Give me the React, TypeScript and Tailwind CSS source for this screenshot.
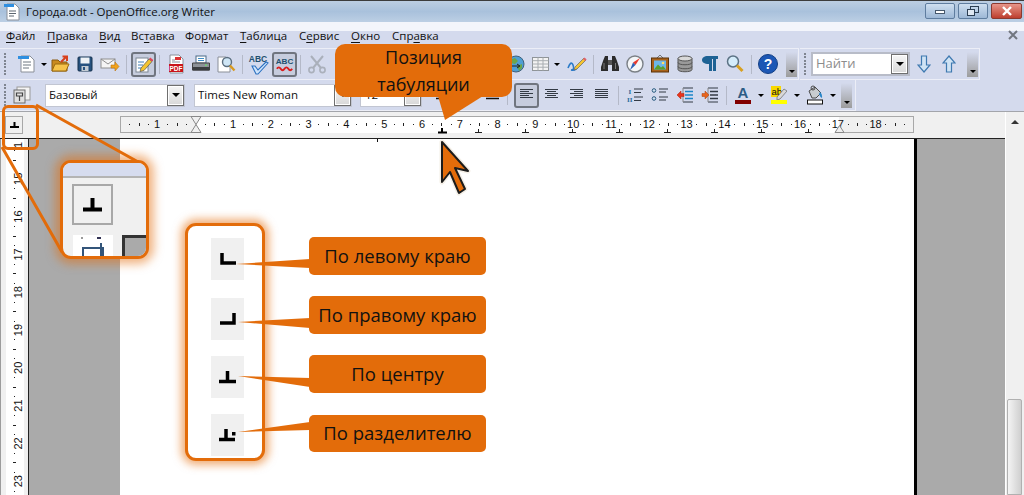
import React from "react";

const S = ({ children, w = 20, h = 20 }: { children: React.ReactNode; w?: number; h?: number }) => (
  <svg width={w} height={h} viewBox={`0 0 ${w} ${h}`} className="block">{children}</svg>
);

const Btn = ({ children, active, w = "w-[25px]" }: { children?: React.ReactNode; active?: boolean; w?: string }) => (
  <div className={`${w} h-[25px] shrink-0 flex items-center justify-center rounded-[3px] ${active ? "border-2 border-[#70757f] bg-[#c6ccdd]" : ""}`}>
    {children}
  </div>
);
const Sep = () => (
  <div className="w-[8px] h-[25px] shrink-0 flex justify-center items-center">
    <div className="w-px h-[19px] bg-[#b4b9c8]" />
  </div>
);
const Drop = ({ w = "w-[8px]" }: { w?: string }) => (
  <div className={`${w} h-[25px] shrink-0 flex items-center justify-center`}>
    <div className="w-0 h-0 border-x-[3px] border-x-transparent border-t-[3px] border-t-black" />
  </div>
);
const Grip = () => (
  <div className="w-[3px] h-[24px] shrink-0 flex flex-col justify-between py-px">
    {Array.from({ length: 7 }).map((_, i) => (
      <div key={i} className="w-[2px] h-[2px] bg-[#7f8590]" />
    ))}
  </div>
);
const More = () => (
  <div className="w-[11px] h-[25px] shrink-0 flex items-end justify-center pb-[4px] bg-gradient-to-b from-[#d4daed] to-[#9c9c9c]">
    <div className="w-0 h-0 border-x-[3px] border-x-transparent border-t-[3px] border-t-black" />
  </div>
);
const ComboArrow = () => (
  <div className="w-[17px] h-full shrink-0 flex items-center justify-center border border-[#6f6f6f] bg-gradient-to-b from-[#f6f6f6] to-[#d8d8d8] outline outline-1 outline-white -outline-offset-2">
    <div className="w-0 h-0 border-x-[4px] border-x-transparent border-t-[4px] border-t-black" />
  </div>
);
const Combo = ({ w, text, pad = "pl-[3px]" }: { w: string; text: string; pad?: string }) => (
  <div className={`${w} h-[23px] shrink-0 flex items-center bg-white border border-[#c2c6d2]`}>
    <span className={`flex-1 ${pad} text-[11.5px] text-[#111] whitespace-nowrap overflow-hidden`}>{text}</span>
    <ComboArrow />
  </div>
);

const Page = ({ x = 4, y = 2, w = 11, h = 15 }: { x?: number; y?: number; w?: number; h?: number }) => (
  <path d={`M${x} ${y}h${w - 4}l4 4v${h - 4}h-${w}z`} fill="#fff" stroke="#8a8f98" strokeWidth="1" />
);

const IconNew = () => (
  <S w={20} h={20}>
    <Page x={4} y={2} w={13} h={16} />
    <rect x="1" y="2" width="11" height="3" fill="#2f8fe0" />
    <path d="M6 8h8M6 11h8M6 14h6" stroke="#6d7680" strokeWidth="1" />
  </S>
);
const IconOpen = () => (
  <S>
    <path d="M2 6h6l2 2h7v9H2z" fill="#c98a20" stroke="#8a5a10" />
    <path d="M2 17l3-7h14l-3 7z" fill="#f6c34a" stroke="#9a6a10" />
    <path d="M11 8l5-5M12.5 2.5H17V7" stroke="#d8401c" strokeWidth="2" fill="none" />
  </S>
);
const IconSave = () => (
  <S>
    <rect x="3" y="3" width="14" height="14" rx="1" fill="#26527f" stroke="#16324f" />
    <rect x="5.5" y="3.5" width="9" height="6" fill="#eef2f6" />
    <rect x="6.5" y="12" width="7" height="5" fill="#c4ccd4" />
    <rect x="8" y="13" width="2" height="3" fill="#26527f" />
  </S>
);
const IconMail = () => (
  <S>
    <rect x="1" y="5" width="14" height="9" fill="#f5f5f5" stroke="#8f8f8f" />
    <path d="M1 5l7 5 7-5" fill="none" stroke="#8f8f8f" />
    <path d="M11 11h4V8l4 4.5-4 4.5v-3h-4z" fill="#f2a31c" stroke="#b87410" strokeWidth=".6" />
  </S>
);
const IconEdit = () => (
  <S>
    <rect x="3" y="4" width="12" height="14" fill="#fff" stroke="#7c8794" />
    <path d="M5 8h6M5 11h5M5 14h7" stroke="#3f7fb5" />
    <path d="M8 14l8-9 3 2.5-8 9-4 1z" fill="#f4c430" stroke="#555" strokeWidth=".7" />
    <path d="M16 5l1.2-1.4 3 2.4L19 7.5z" fill="#e0455a" />
  </S>
);
const IconPdf = () => (
  <S>
    <Page x={4} y={1} w={13} h={18} />
    <rect x="9" y="3" width="6" height="3" fill="#d33" />
    <path d="M6 6h3M6 8h8" stroke="#8a8f98" />
    <rect x="3" y="10" width="14" height="8" fill="#c9151b" />
    <text x="10" y="16.6" fontSize="6.5" fontWeight="700" textAnchor="middle" fill="#fff" fontFamily="Liberation Sans">PDF</text>
  </S>
);
const IconPrint = () => (
  <S>
    <rect x="5" y="2" width="10" height="7" fill="#fff" stroke="#4a6a88" />
    <path d="M7 4.5h6M7 6.5h6" stroke="#3f8fc8" />
    <path d="M1.5 9h17v7h-17z" fill="#8d9298" stroke="#444" />
    <rect x="1.5" y="13" width="17" height="3.5" fill="#3a3d40" />
    <rect x="14" y="10.5" width="2" height="1.5" fill="#6fd36f" />
  </S>
);
const IconPreview = () => (
  <S>
    <Page x={2} y={3} w={12} h={15} />
    <circle cx="11" cy="8" r="4.5" fill="#cfe6f6" stroke="#5c6f80" strokeWidth="1.4" />
    <path d="M14 11.5l4.5 5" stroke="#d89a20" strokeWidth="2.4" />
  </S>
);
const IconAbc = () => (
  <S w={22} h={22}>
    <text x="10" y="8.6" fontSize="8.5" fontWeight="700" textAnchor="middle" fill="#23506f" fontFamily="Liberation Sans">ABC</text>
    <path d="M4 13l3 0 3 4 8-8 2 1-10 11-2 0z" fill="#cfe4fb" stroke="#2a70c0" strokeWidth="1.1" />
  </S>
);
const IconAbcWave = () => (
  <S w={22} h={20}>
    <text x="11" y="10" fontSize="8.5" fontWeight="700" textAnchor="middle" fill="#23506f" fontFamily="Liberation Sans">ABC</text>
    <path d="M3 15q2-3 4 0t4 0 4 0 4 0" fill="none" stroke="#d91c1c" strokeWidth="2" />
  </S>
);
const IconCut = () => (
  <S>
    <path d="M4 2l10 12M16 2L6 14" stroke="#aab0bb" strokeWidth="2" />
    <circle cx="4.5" cy="16" r="2.6" fill="none" stroke="#aab0bb" strokeWidth="1.6" />
    <circle cx="15.5" cy="16" r="2.6" fill="none" stroke="#aab0bb" strokeWidth="1.6" />
  </S>
);
const IconGlobe = () => (
  <S>
    <circle cx="10" cy="10" r="8" fill="#4f9fd3" stroke="#40607a" />
    <path d="M4 6l5-2 3 3-3 3-4-1zM11 12l5-2 0 4-3 3z" fill="#6ca54a" />
    <path d="M5 12h8m-2-2l3 2-3 2" stroke="#222" fill="none" />
  </S>
);
const IconTable = () => (
  <S w={17} h={14}>
    <rect x=".5" y=".5" width="16" height="13" fill="#f3f3f3" stroke="#8f9498" />
    <path d="M.5 3.7h16M.5 7h16M.5 10.2h16M6 .5v13M11 .5v13" stroke="#a8adb1" />
  </S>
);
const IconDraw = () => (
  <S>
    <path d="M1 14q3-8 5-3t-2 5q5 1 6-3" fill="none" stroke="#2a7ac8" strokeWidth="1.6" />
    <path d="M8 13l9-9 2 2-9 9-3 1z" fill="#f4c430" stroke="#666" strokeWidth=".7" />
    <path d="M16 5l1.6-1.6 2 2L18 7z" fill="#e0606a" />
  </S>
);
const IconBinoc = () => (
  <S>
    <path d="M3 7l2-5h3v15H1V13z" fill="#2c2c2c" />
    <path d="M17 7l-2-5h-3v15h7V13z" fill="#2c2c2c" />
    <rect x="8" y="6" width="4" height="5" fill="#555" />
    <path d="M4 9v6M15.5 9v6" stroke="#7a7a7a" />
  </S>
);
const IconCompass = () => (
  <S>
    <circle cx="10" cy="10" r="8" fill="#f4f6f8" stroke="#7b8086" strokeWidth="1.4" />
    <path d="M15 4l-7 4.5 2.5 2.5z" fill="#e63a2e" />
    <path d="M5 16l3-7.5 2.5 2.5z" fill="#2c62b8" />
  </S>
);
const IconPicture = () => (
  <S w={20} h={20}>
    <path d="M7 4l3-3 3 3" fill="none" stroke="#777" />
    <rect x="1.5" y="4" width="17" height="14" fill="#a9621a" stroke="#5a3208" />
    <rect x="4" y="6.5" width="12" height="9" fill="#6cb6e8" />
    <path d="M4 15.5l4-5 3 3 2-1.5 3 3.5z" fill="#5aa02c" />
    <circle cx="13" cy="9" r="1.3" fill="#ffe06a" />
  </S>
);
const IconDb = () => (
  <S>
    <path d="M3 4.5v11c0 3 14 3 14 0v-11z" fill="#9a9a9a" stroke="#555" />
    <ellipse cx="10" cy="4.5" rx="7" ry="2.5" fill="#d8d8d8" stroke="#555" />
    <path d="M3 8.5c0 3 14 3 14 0M3 12.5c0 3 14 3 14 0" fill="none" stroke="#555" />
  </S>
);
const IconPilcrow = () => (
  <S>
    <path d="M9 17V10C4 10 2 8 2 6s2-4 6-4h10v3h-2v12h-3V5h-1v12z" fill="#1d6294" />
  </S>
);
const IconFind = () => (
  <S>
    <circle cx="8" cy="7.5" r="5.5" fill="#d4ecfa" stroke="#5c7385" strokeWidth="1.5" />
    <path d="M12 11.5l5.500 5.500" stroke="#d8a020" strokeWidth="3" />
  </S>
);
const IconHelp = () => (
  <S w={22} h={22}>
    <circle cx="11" cy="11" r="9.500" fill="#1c57b5" stroke="#133f85" />
    <text x="11" y="16" fontSize="14" fontWeight="700" textAnchor="middle" fill="#fff" fontFamily="Liberation Sans">?</text>
  </S>
);
const IconStyle = () => (
  <S>
    <rect x="5" y="2" width="13" height="13" fill="#f4f4f4" stroke="#9a9a9a" />
    <rect x="2" y="5" width="11" height="13" fill="#e0e0e0" stroke="#6c6c6c" />
    <path d="M4.5 8h6v3h-6zM7.5 11v5" fill="none" stroke="#444" strokeWidth="1.2" />
  </S>
);
const Lines = ({ rows }: { rows: [number, number][] }) => (
  <S w={14} h={12}>
    {rows.map(([x, l], i) => (
      <rect key={i} x={x} y={i * 2} width={l} height="1" fill="#333a44" />
    ))}
  </S>
);
const IconNum = () => (
  <S w={18} h={16}>
    <text x="2.5" y="7" fontSize="7" fontWeight="700" fill="#2a6a9a" fontFamily="Liberation Serif">I</text>
    <text x="1" y="15" fontSize="7" fontWeight="700" fill="#2a6a9a" fontFamily="Liberation Serif">II</text>
    <path d="M8 2h9M8 5.5h7M8 10h9M8 13.5h7" stroke="#333a44" />
  </S>
);
const IconBul = () => (
  <S w={18} h={16}>
    <circle cx="3" cy="3.5" r="1.8" fill="#cfe0ee" stroke="#2a5a80" />
    <circle cx="3" cy="11.5" r="1.8" fill="#cfe0ee" stroke="#2a5a80" />
    <path d="M8 2h9M8 5h7M8 10h9M8 13h7" stroke="#333a44" />
  </S>
);
const IconIndent = ({ right }: { right?: boolean }) => (
  <S w={18} h={16}>
    <path d="M7 1h10M7 15h10" stroke="#333a44" />
    <path d="M9 4.5h8M9 8h8M9 11.5h8" stroke={right ? "#333a44" : "#1a86c8"} strokeWidth="1.4" />
    <path d="M7 1v14" stroke="#8a8a8a" />
    {right ? (
      <path d="M1 6.5h3V4l4 4-4 4V9.5H1z" fill="#e8641c" stroke="#a8400c" strokeWidth=".5" />
    ) : (
      <path d="M8 6.5H5V4L1 8l4 4V9.5h3z" fill="#e8341c" stroke="#a8200c" strokeWidth=".5" />
    )}
  </S>
);
const IconColor = () => (
  <S w={16} h={20}>
    <text x="8" y="13" fontSize="15" fontWeight="700" textAnchor="middle" fill="#2d5c85" fontFamily="Liberation Sans">A</text>
    <rect x="0" y="15" width="16" height="4" fill="#800000" />
  </S>
);
const IconHigh = () => (
  <S w={16} h={20}>
    <rect x="0" y="1" width="10" height="11" fill="#f8d800" />
    <text x=".5" y="10" fontSize="9.5" fill="#111" fontFamily="Liberation Sans">ab</text>
    <path d="M6 12l7-8 3 2-7 8-3 1z" fill="#d8d8d8" stroke="#666" strokeWidth=".7" />
    <rect x="0" y="15" width="16" height="4" fill="#ffff00" />
  </S>
);
const IconBg = () => (
  <S w={16} h={20}>
    <path d="M2 6l6-4 6 6-5 5H5z" fill="#c8ccd0" stroke="#4a4a4a" />
    <path d="M13 7q2.5 2 2 6-2-1-3-4z" fill="#2a86c8" />
    <circle cx="6" cy="3" r="2" fill="none" stroke="#4a4a4a" />
    <rect x=".5" y="15" width="15" height="4" fill="#fff" stroke="#111" />
  </S>
);
const ArrowV = ({ up }: { up?: boolean }) => (
  <S w={14} h={18}>
    <path
      d={up ? "M7 1l6 7H9.500v9h-5V8H1z" : "M7 17l6-7H9.500V1h-5v9H1z"}
      fill="#cfe3f4"
      stroke="#3f79b0"
      strokeWidth="1.2"
    />
  </S>
);

const Menu = ({ before = "", ul, after = "", w }: { before?: string; ul: string; after?: string; w: string }) => (
  <span className={`${w} shrink-0 whitespace-nowrap`}>
    {before}
    <span className="underline underline-offset-2">{ul}</span>
    {after}
  </span>
);

const HRuler = () => {
  const W = 794;
  const nums: { x: number; t: string }[] = [{ x: 157 - 120, t: "1" }];
  for (let n = 1; n <= 18; n++) nums.push({ x: 233 + 37.8 * (n - 1) - 120, t: String(n) });
  const ticks: React.ReactNode[] = [];
  for (let i = 0; i < 84; i++) {
    const x = 195.5 - 120 + (i - 8) * 9.45;
    if (x < 3 || x > W - 3) continue;
    const q = ((i % 4) + 4) % 4;
    if (q === 0) continue;
    ticks.push(q === 2 ? <rect key={i} x={Math.round(x)} y="7" width="1" height="3" fill="#222" /> : <rect key={i} x={Math.round(x)} y="8" width="1" height="1" fill="#222" />);
  }
  const tabs = [478, 525, 572, 619, 667, 714, 761, 808];
  return (
    <svg width={W} height="18" viewBox={`0 0 ${W} 18`} className="block shrink-0">
      <rect x=".5" y=".5" width={W - 1} height="16" fill="#f0f0f0" stroke="#a8a8a8" />
      <rect x="76" y="1" width="643" height="16" fill="#fff" />
      {ticks}
      {nums.map((n, i) => (
        <text key={i} x={n.x} y="12" fontSize="11" textAnchor="middle" fill="#111" fontFamily="Liberation Sans">{n.t}</text>
      ))}
      {tabs.map((x) => (
        <path key={x} d={`M${x - 120 + 0.5} 13v3M${x - 123} 16.5h7`} stroke="#222" />
      ))}
      <path d={`M${442 - 120} 12v4M${442 - 124} 16.5h9`} stroke="#000" strokeWidth="2" />
      <path d="M71 .5h10l-5 8 5 8H71l5-8z" fill="#f0f0f0" stroke="#888" />
      <path d="M715 16.5h9l-4.500-7z" fill="#f0f0f0" stroke="#888" />
    </svg>
  );
};

const VRuler = () => {
  const nums = [15, 16, 17, 18, 19, 20, 21, 22, 23];
  const dots: React.ReactNode[] = [];
  for (let i = 0; i < 40; i++) {
    const y = 2 + i * 9.45;
    const q = i % 4;
    if (q === 0) continue;
    dots.push(<rect key={i} x={q === 2 ? 13 : 14} y={Math.round(y)} width={q === 2 ? 3 : 1} height="1" fill="#222" />);
  }
  return (
    <svg width="29" height="356" viewBox="0 0 29 356" className="block shrink-0">
      <rect x="0" width="1" height="356" fill="#9c9c9c" />
      <rect x="1" width="5" height="356" fill="#f0f0f0" />
      <rect x="6" width="18" height="356" fill="#fff" />
      <rect x="24" width="4" height="356" fill="#f0f0f0" />
      <rect x="28" width="1" height="356" fill="#222" />
      {dots}
      <text x="18" y="6" fontSize="11" textAnchor="middle" dominantBaseline="central" fill="#111" fontFamily="Liberation Sans" transform="rotate(-90 18 6)">1</text>
      {nums.map((n, i) => {
        const y = 2 + (i + 1) * 37.8;
        return (
          <text key={n} x="18" y={y} fontSize="11" textAnchor="middle" dominantBaseline="central" fill="#111" fontFamily="Liberation Sans" transform={`rotate(-90 18 ${y})`}>{n}</text>
        );
      })}
    </svg>
  );
};

const Label = ({ children, cls }: { children: React.ReactNode; cls: string }) => (
  <div className={`absolute left-[309px] w-[177px] flex items-center justify-center rounded-[5px] bg-[#e36c0a] text-[18.5px] leading-none text-[#111] whitespace-nowrap ${cls}`}>
    {children}
  </div>
);

const Tile = ({ children, cls = "" }: { children: React.ReactNode; cls?: string }) => (
  <div className={`w-[33px] h-[42px] bg-[#f0f0f0] flex items-center justify-center ${cls}`}>{children}</div>
);
const TabL = () => <S w={16} h={14}><path d="M2 1v10h14" fill="none" stroke="#000" strokeWidth="3.5" /></S>;
const TabR = () => <S w={16} h={14}><path d="M14 1v10H0" fill="none" stroke="#000" strokeWidth="3.5" /></S>;
const TabC = () => <S w={17} h={14}><path d="M8.500 1v10M0 11.500h17" fill="none" stroke="#000" strokeWidth="3.5" /></S>;
const TabD = () => (
  <S w={17} h={14}>
    <path d="M7 1v10M0 11.500h16" fill="none" stroke="#000" strokeWidth="3.5" />
    <rect x="13" y="4" width="3.5" height="3.5" fill="#000" />
  </S>
);

export default function App() {
  return (
    <div className="relative w-[1024px] h-[495px] overflow-hidden flex flex-col bg-[#d4daed] font-['Open_Sans','Noto_Sans',sans-serif]">
      {/* Title bar */}
      <div className="h-[22px] shrink-0 flex items-center border-t border-[#3c3c3c] bg-gradient-to-b from-[#bccee2] via-[#a9c1dc] to-[#bccfe4]">
        <div className="w-[26px] pl-[4px] shrink-0">
          <S w={16} h={18}>
            <path d="M3 1h8l4 4v12H3z" fill="#fff" stroke="#8a9099" />
            <rect x="0" y="1" width="10" height="3" fill="#2f8fe0" />
            <path d="M5 8h7M5 10.500h7M5 13h5" stroke="#5c6670" />
          </S>
        </div>
        <span className="text-[11.5px] text-[#111] whitespace-nowrap flex-1">Города.odt - OpenOffice.org Writer</span>
        <div className="flex items-start self-start gap-[3px] pr-[2px] pt-[2px]">
          <div className="w-[30px] h-[16px] rounded-[2px] border border-[#5f7d9f] bg-gradient-to-b from-[#cfdff0] to-[#9db8d6] flex items-center justify-center">
            <div className="w-[10px] h-[4px] bg-white border border-[#46586c] mt-[2px]" />
          </div>
          <div className="w-[30px] h-[16px] rounded-[2px] border border-[#5f7d9f] bg-gradient-to-b from-[#cfdff0] to-[#9db8d6] flex items-center justify-center">
            <S w={12} h={10}>
              <rect x="3.5" y=".5" width="8" height="6" fill="none" stroke="#2c3e52" />
              <rect x=".5" y="3.5" width="7" height="6" fill="#dfe8f2" stroke="#2c3e52" />
            </S>
          </div>
          <div className="w-[31px] h-[16px] rounded-[2px] border border-[#8a3a30] bg-gradient-to-b from-[#e6958a] to-[#bd3d2d] flex items-center justify-center">
            <S w={12} h={10}>
              <path d="M2 1l8 8M10 1L2 9" stroke="#fff" strokeWidth="2.4" />
            </S>
          </div>
        </div>
      </div>

      {/* Menu bar */}
      <div className="h-[26px] shrink-0 flex items-start pt-[6px] pl-[6px] text-[11.5px] leading-[16px] text-[#111] bg-[linear-gradient(#f3f5fb_9px,#d4daed_9px)]">
        <Menu ul="Ф" after="айл" w="w-[41px]" />
        <Menu ul="П" after="равка" w="w-[52px]" />
        <Menu ul="В" after="ид" w="w-[32px]" />
        <Menu before="Вс" ul="т" after="авка" w="w-[54px]" />
        <Menu before="Фо" ul="р" after="мат" w="w-[55px]" />
        <Menu ul="Т" after="аблица" w="w-[59px]" />
        <Menu before="С" ul="е" after="рвис" w="w-[52px]" />
        <Menu ul="О" after="кно" w="w-[41px]" />
        <Menu before="Спр" ul="а" after="вка" w="w-[60px]" />
        <div className="ml-auto mr-[6px] mt-[2px]">
          <S w={10} h={10}><path d="M1 1l8 8M9 1L1 9" stroke="#71767f" strokeWidth="2" /></S>
        </div>
      </div>

      {/* Toolbar row 1 */}
      <div className="h-[32px] shrink-0 flex">
        <div className="w-[799px] flex items-center pl-[4px] pr-[1px] border-t border-b border-r border-[#eceef7]">
          <Grip />
          <div className="w-[7.5px] shrink-0" />
          <Btn><IconNew /></Btn>
          <Drop />
          <Btn><IconOpen /></Btn>
          <Btn><IconSave /></Btn>
          <Btn><IconMail /></Btn>
          <Sep />
          <Btn active><IconEdit /></Btn>
          <Sep />
          <Btn><IconPdf /></Btn>
          <Btn><IconPrint /></Btn>
          <Btn><IconPreview /></Btn>
          <Sep />
          <Btn><IconAbc /></Btn>
          <Btn active><IconAbcWave /></Btn>
          <Sep />
          <Btn><IconCut /></Btn>
          <div className="w-[173.5px] shrink-0" />
          <Btn><IconGlobe /></Btn>
          <Btn><IconTable /></Btn>
          <Drop />
          <Btn w="w-[28px] pl-[3px]"><IconDraw /></Btn>
          <Sep />
          <Btn><IconBinoc /></Btn>
          <Btn><IconCompass /></Btn>
          <Btn><IconPicture /></Btn>
          <Btn><IconDb /></Btn>
          <Btn><IconPilcrow /></Btn>
          <Btn><IconFind /></Btn>
          <Sep />
          <Btn><IconHelp /></Btn>
          <div className="w-[6px] shrink-0" />
          <More />
        </div>
        <div className="ml-px w-[180px] flex items-center pl-[4px] border-t border-b border-r border-[#eceef7]">
          <Grip />
          <div className="w-[4px] shrink-0" />
          <div className="w-[99px] h-[24px] shrink-0 flex items-center bg-white border-2 border-[#b8bcc8]">
            <span className="flex-1 pl-[3px] text-[13px] text-[#8c8c8c]">Найти</span>
            <ComboArrow />
          </div>
          <div className="w-[1px] shrink-0" />
          <Btn><ArrowV /></Btn>
          <Btn><ArrowV up /></Btn>
          <div className="w-[6px] shrink-0" />
          <More />
        </div>
      </div>

      {/* Toolbar row 2 */}
      <div className="h-[31px] shrink-0 flex">
        <div className="w-[856px] flex items-center pl-[4px] border-b border-r border-[#eceef7]">
          <Grip />
          <div className="w-[2.5px] shrink-0" />
          <Btn><IconStyle /></Btn>
          <Combo w="w-[140px] ml-[10.5px]" text="Базовый" />
          <Combo w="w-[158px] ml-[9px]" text="Times New Roman" />
          <Combo w="w-[62px] ml-[8px]" text="12" pad="pl-[4px]" />
          <div className="w-[6.5px] shrink-0" />
          <Btn><S w={25} h={25}><path d="M7 15.500h4" stroke="#111" strokeWidth="1.500" /></S></Btn>
          <Btn />
          <Btn><S w={25} h={25}><path d="M7 15.500h13" stroke="#111" strokeWidth="1.500" /></S></Btn>
          <Sep />
          <div className="w-[2.5px] shrink-0" />
          <Btn active><Lines rows={[[0, 13], [0, 9], [0, 13], [0, 9], [0, 13]]} /></Btn>
          <Btn><Lines rows={[[0, 13], [2, 9], [0, 13], [2, 9], [0, 13]]} /></Btn>
          <Btn><Lines rows={[[0, 13], [4, 9], [0, 13], [4, 9], [0, 13]]} /></Btn>
          <Btn><Lines rows={[[0, 13], [0, 13], [0, 13], [0, 13], [0, 13]]} /></Btn>
          <Sep />
          <Btn><IconNum /></Btn>
          <Btn><IconBul /></Btn>
          <Btn><IconIndent /></Btn>
          <Btn><IconIndent right /></Btn>
          <Sep />
          <Btn><IconColor /></Btn>
          <Drop w="w-[11px]" />
          <Btn><IconHigh /></Btn>
          <Drop w="w-[11px]" />
          <Btn><IconBg /></Btn>
          <Drop w="w-[11px]" />
          <div className="w-[3px] shrink-0" />
          <More />
        </div>
      </div>

      {/* Work area */}
      <div className="flex-1 flex min-h-0 border-t border-[#a3a5ab]">
        <div className="flex-1 flex flex-col min-w-0">
          <div className="h-[26px] shrink-0 flex items-start pt-[4px] pl-[5px] bg-[#f0f0f0]">
            <div className="w-[18px] h-[18px] shrink-0 border border-[#a8a8a8] flex items-center justify-center">
              <S w={9} h={6}><path d="M4.500 0v5M0 5h9" stroke="#000" strokeWidth="2" /></S>
            </div>
            <div className="w-[97px] shrink-0" />
            <HRuler />
          </div>
          <div className="flex-1 flex min-h-0 border-t border-[#222]">
            <VRuler />
            <div className="flex-1 bg-[#aaaaaa] flex min-w-0">
              <div className="ml-[91px] w-[794px] bg-white" />
              <div className="w-[3px] bg-black" />
            </div>
          </div>
        </div>
        <div className="w-[19px] shrink-0 flex flex-col bg-[#f0f0f0] border-l border-white">
          <div className="flex justify-center pt-[8px]">
            <div className="w-0 h-0 border-x-[4px] border-x-transparent border-b-[4px] border-b-[#333]" />
          </div>
          <div className="mt-auto ml-px w-[15px] h-[96px] rounded-t-[2px] border border-[#b0b0b0] bg-gradient-to-r from-[#f4f4f4] to-[#cfcfcf]" />
        </div>
      </div>

      {/* Alignment group */}
      <div className="absolute left-[185px] top-[223px] w-[80px] h-[238px] rounded-[11px] border-[3px] border-[#e36c0a] bg-white shadow-[0_0_8px_4px_rgba(227,108,10,0.55)] flex flex-col items-center pt-[12px] pl-[5px] gap-[16px]">
        <Tile><TabL /></Tile>
        <Tile cls="mt-[2px]"><TabR /></Tile>
        <Tile><TabC /></Tile>
        <Tile><TabD /></Tile>
      </div>

      {/* Annotation lines, tails and pointer */}
      <svg width="1024" height="495" viewBox="0 0 1024 495" className="absolute left-0 top-0 pointer-events-none">
        <rect x="377" y="139" width="1" height="3" fill="#111" />
        <path d="M36 105L140 163M2 147L62 252" stroke="#e36c0a" strokeWidth="3" fill="none" />
        <path d="M438 96L445 120L483 96z" fill="#e36c0a" />
        <path d="M236 264L310 259V268z" fill="#e36c0a" />
        <path d="M238 322L310 318V328z" fill="#e36c0a" />
        <path d="M238 376L310 378V387z" fill="#e36c0a" />
        <path d="M238 432L310 422V430z" fill="#e36c0a" />
        <path d="M442 142L468 171L455 168L465 189L459 193L450 172L442 182z" fill="#e36c0a" stroke="#f4efe6" strokeWidth="5" strokeLinejoin="round" />
        <path d="M442 142L468 171L455 168L465 189L459 193L450 172L442 182z" fill="#e36c0a" stroke="#1c1c1c" strokeWidth="2" strokeLinejoin="round" />
      </svg>

      <div className="absolute left-[2px] top-[105px] w-[37px] h-[45px] rounded-[6px] border-[3px] border-[#e36c0a]" />

      {/* Magnified detail */}
      <div className="absolute left-[60px] top-[160px] w-[89px] h-[99px] rounded-[11px] border-[3px] border-[#e36c0a] bg-[#f0f0f0] overflow-hidden shadow-[0_0_10px_5px_rgba(227,108,10,0.5)]">
        <div className="h-[15px] bg-[#d6dcef] border-b-2 border-[#b4b4b4]" />
        <div className="ml-[9px] mt-[6px] w-[41px] h-[41px] border-2 border-[#a8a8a8] flex items-center justify-center">
          <S w={19} h={16}><path d="M9.500 1v12M0 12.500h19" fill="none" stroke="#000" strokeWidth="4" /></S>
        </div>
        <div className="flex mt-[10px]">
          <div className="ml-[10px] w-[40px] h-[30px] bg-white flex justify-center items-start">
            <S w={26} h={22}>
              <rect x="1" y="2" width="2" height="2" fill="#999" />
              <rect x="27" y="2" width="3" height="2" fill="#334" />
              <rect x="17" y="2" width="4" height="2" fill="#335" />
              <path d="M3 21v-8h20v8M21 8v13" fill="none" stroke="#33557a" strokeWidth="2" />
            </S>
          </div>
          <div className="ml-[9px] flex-1 h-[30px] bg-[#aaaaaa] border-l-[3px] border-t-[3px] border-[#333]" />
        </div>
      </div>

      {/* Callouts */}
      <div className="absolute left-[335px] top-[44px] w-[177px] h-[53px] pt-[1px] rounded-[10px] bg-[#e36c0a] flex flex-col items-center justify-center text-[18px] leading-[27px] text-[#111]">
        <span>Позиция</span>
        <span>табуляции</span>
      </div>
      <Label cls="top-[237px] h-[38px]">По левому краю</Label>
      <Label cls="top-[296px] h-[38px]">По правому краю</Label>
      <Label cls="top-[355px] h-[38px]">По центру</Label>
      <Label cls="top-[415px] h-[37px]">По разделителю</Label>
    </div>
  );
}
